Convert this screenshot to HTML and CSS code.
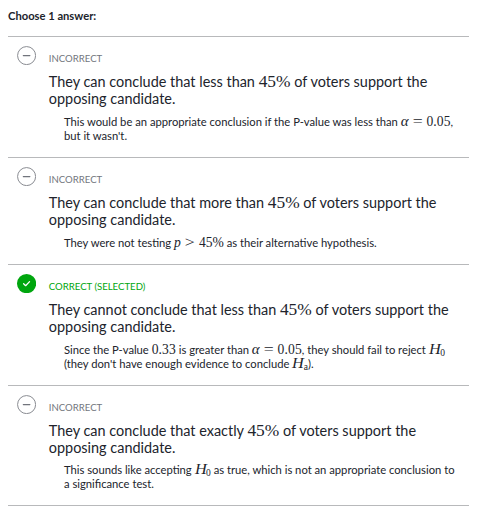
FILE: index.html
```html
<!DOCTYPE html>
<html lang="en">
<head>
<meta charset="utf-8">
<title>Choose 1 answer</title>
<link rel="stylesheet" href="styles.css">
</head>
<body>
<main class="question">
  <h1 class="prompt">Choose 1 answer:</h1>
  <ul class="choices">
    <li class="choice">
      <svg class="icon" viewBox="0 0 20 20"><circle class="ring" cx="10" cy="10" r="9.4"/><path class="dash" d="M6.6 10h6.8"/></svg>
      <div class="body">
        <div class="status">INCORRECT</div>
        <p class="answer">They can conclude that less than <span class="math pct">45%</span> of voters support the<br>opposing candidate.</p>
        <p class="reason">This would be an appropriate conclusion if the P-value was less than <span class="math"><i class="greek">α</i><span class="rel">=</span><span class="num">0.05</span></span>,<br>but it wasn't.</p>
      </div>
    </li>
    <li class="choice">
      <svg class="icon" viewBox="0 0 20 20"><circle class="ring" cx="10" cy="10" r="9.4"/><path class="dash" d="M6.6 10h6.8"/></svg>
      <div class="body">
        <div class="status">INCORRECT</div>
        <p class="answer">They can conclude that more than <span class="math pct">45%</span> of voters support the<br>opposing candidate.</p>
        <p class="reason">They were not testing <span class="math"><i>p</i><span class="rel">&gt;</span><span>45%</span></span> as their alternative hypothesis.</p>
      </div>
    </li>
    <li class="choice">
      <svg class="icon" viewBox="0 0 20 20"><circle class="disc" cx="10" cy="10" r="10"/><path class="check" d="M6.9 10.1l2.1 2.1 4.1-4.3"/></svg>
      <div class="body">
        <div class="status correct">CORRECT (SELECTED)</div>
        <p class="answer">They cannot conclude that less than <span class="math pct">45%</span> of voters support the<br>opposing candidate.</p>
        <p class="reason">Since the P-value <span class="math num">0.33</span> is greater than <span class="math"><i class="greek">α</i><span class="rel">=</span><span class="num">0.05</span></span>, they should fail to reject <span class="math"><i class="hyp">H</i><sub>0</sub></span><br>(they don't have enough evidence to conclude <span class="math"><i class="hyp">H</i><sub>a</sub></span>).</p>
      </div>
    </li>
    <li class="choice last">
      <svg class="icon" viewBox="0 0 20 20"><circle class="ring" cx="10" cy="10" r="9.4"/><path class="dash" d="M6.6 10h6.8"/></svg>
      <div class="body">
        <div class="status">INCORRECT</div>
        <p class="answer">They can conclude that exactly <span class="math pct">45%</span> of voters support the<br>opposing candidate.</p>
        <p class="reason">This sounds like accepting <span class="math"><i class="hyp">H</i><sub>0</sub></span> as true, which is not an appropriate conclusion to<br>a significance test.</p>
      </div>
    </li>
  </ul>
</main>
</body>
</html>
```
FILE: styles.css
```css
body {
  margin: 0;
  background: #fff;
  color: #21242c;
  font-family: Lato, sans-serif;
}
.question {
  width: 461px;
  padding: 8px 0 0 8px;
}
.prompt {
  margin: 0 0 12px;
  font-size: 11.2px;
  line-height: 16px;
  font-weight: 700;
}
.choices {
  margin: 0;
  padding: 0;
  list-style: none;
}
.choice {
  display: flex;
  gap: 12.8px;
  padding: 9px 0 14px 8.8px;
  border-top: 1px solid #b8b9bb;
}
.choice.last {
  border-bottom: 1px solid #b8b9bb;
}
.last .answer {
  margin-bottom: 6.4px;
}
.icon {
  flex: none;
  width: 19.2px;
  height: 19.2px;
}
.ring {
  fill: none;
  stroke: #85878d;
  stroke-width: 1;
}
.dash {
  stroke: #71747c;
  stroke-width: 1.3;
  stroke-linecap: round;
}
.disc {
  fill: #00a60e;
}
.check {
  fill: none;
  stroke: #fff;
  stroke-width: 1.3;
  stroke-linecap: round;
  stroke-linejoin: round;
}
.body {
  padding-top: 6px;
  white-space: nowrap;
}
.status {
  font-size: 9.6px;
  line-height: 14px;
  color: #73767d;
}
.correct {
  color: #00a60e;
}
.answer {
  margin: 7px 0 7.4px;
  font-size: 14.44px;
  line-height: 17.28px;
}
.reason {
  margin: 0 0 0 15.2px;
  font-size: 11.23px;
  line-height: 14px;
}
.math {
  font-family: "Liberation Serif", serif;
  font-size: 13.6px;
  line-height: 0;
}
.math.pct {
  font-size: 17.4px;
}
.num {
  letter-spacing: 0.1px;
}
.rel {
  display: inline-block;
  margin: 0 5.2px;
  transform: scaleX(1.3);
}
.greek {
  display: inline-block;
  margin-right: 0.5px;
  transform: scaleX(1.1);
}
.hyp {
  display: inline-block;
  width: 11.5px;
  font-size: 14.2px;
  transform: scaleX(1.15);
  transform-origin: left;
}
sub {
  font-size: 9.5px;
  line-height: 0;
  position: relative;
  top: 2px;
  vertical-align: baseline;
}
```
